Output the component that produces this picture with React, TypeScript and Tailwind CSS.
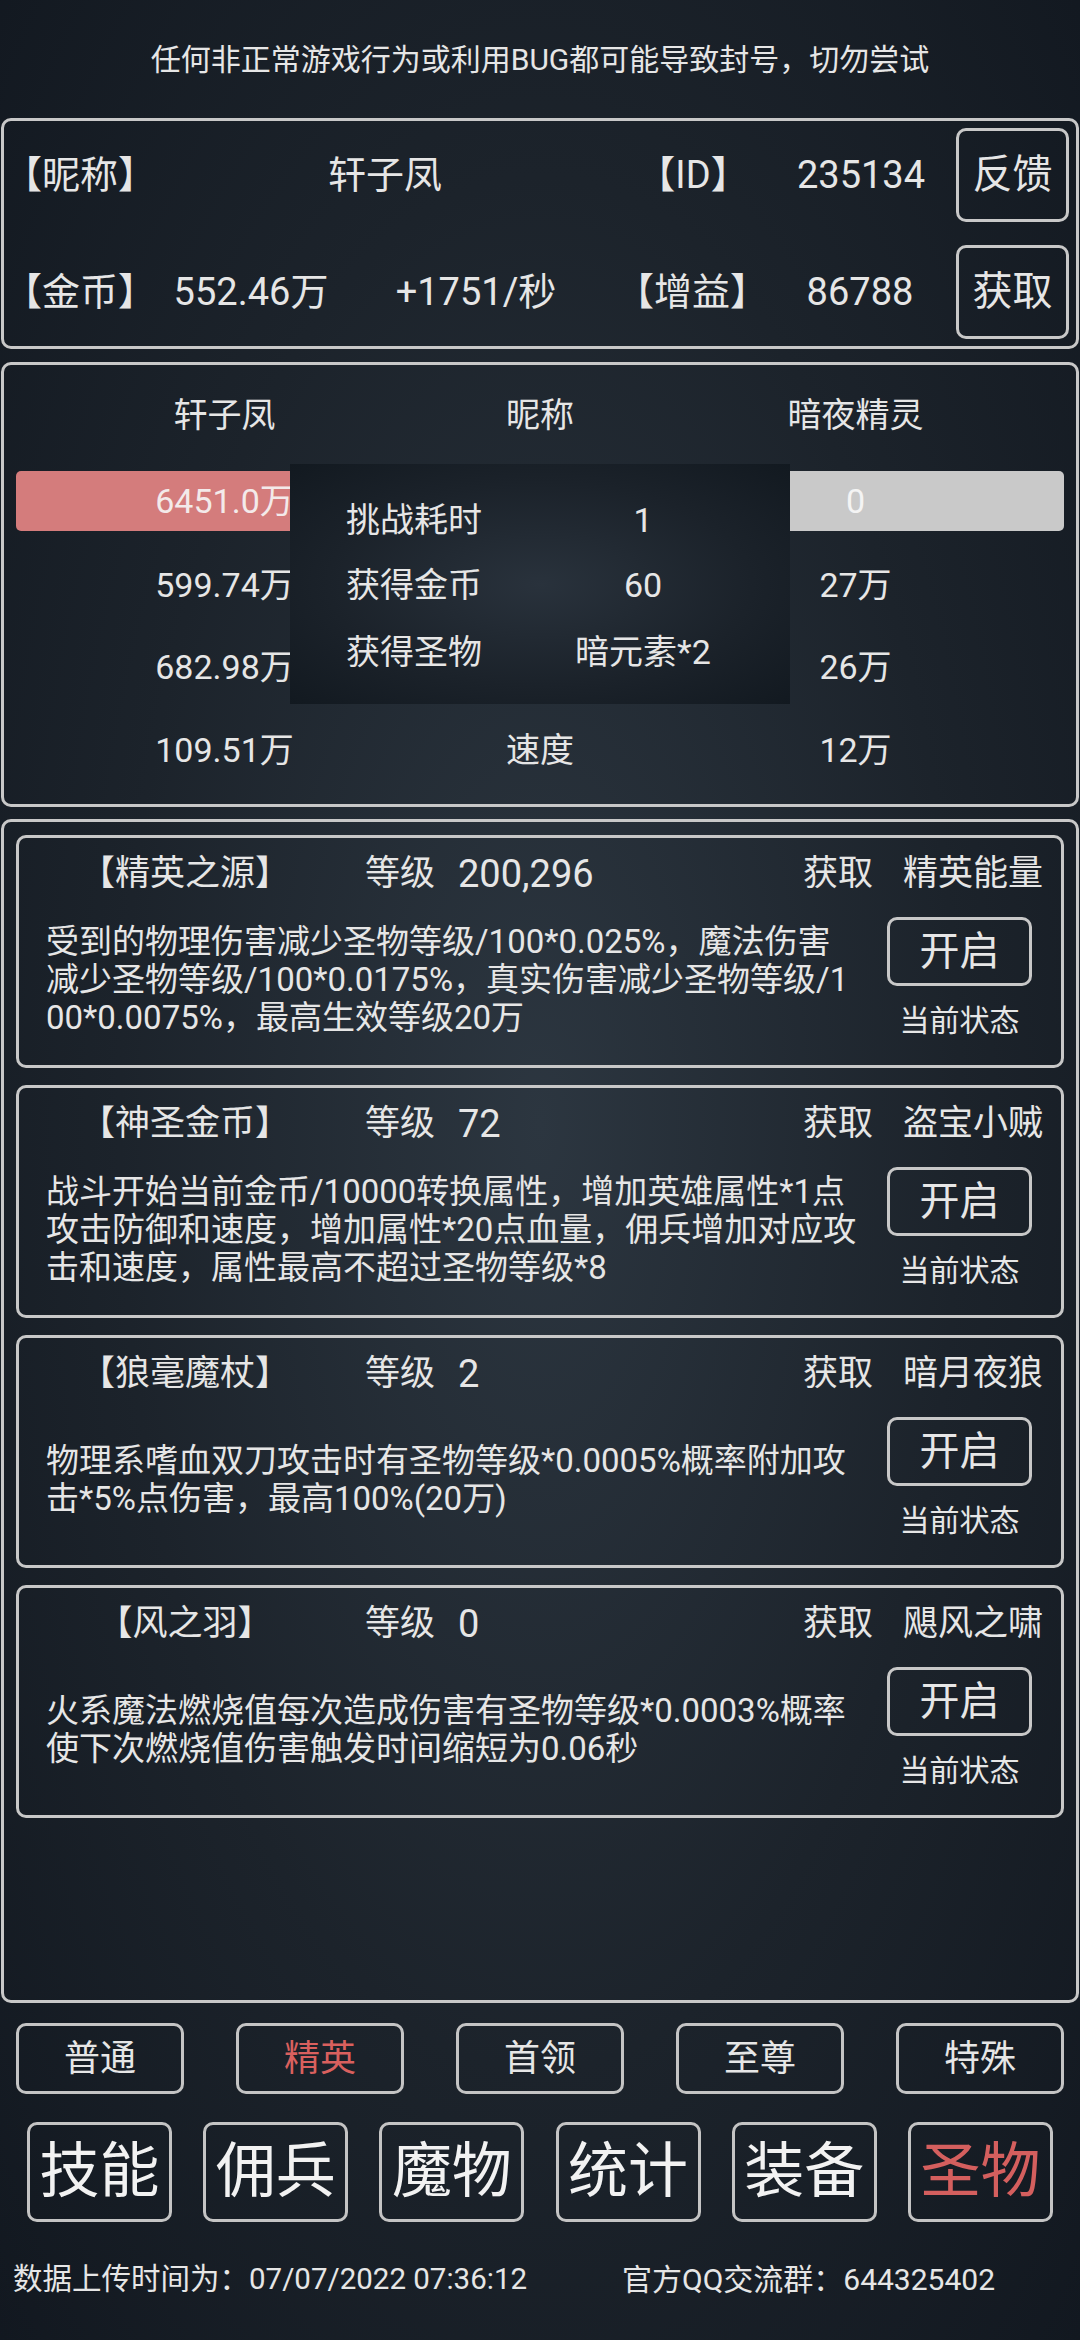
import React from "react";

const font = "font-['Roboto','Noto_Sans_CJK_SC',sans-serif]";
const line = "border-[3px] border-[#c8c8c8] rounded-[10px]";

const relics = [
  {
    name: "【精英之源】",
    level: "200,296",
    source: "精英能量",
    desc: [
      "受到的物理伤害减少圣物等级/100*0.025%，魔法伤害",
      "减少圣物等级/100*0.0175%，真实伤害减少圣物等级/1",
      "00*0.0075%，最高生效等级20万",
    ],
  },
  {
    name: "【神圣金币】",
    level: "72",
    source: "盗宝小贼",
    desc: [
      "战斗开始当前金币/10000转换属性，增加英雄属性*1点",
      "攻击防御和速度，增加属性*20点血量，佣兵增加对应攻",
      "击和速度，属性最高不超过圣物等级*8",
    ],
  },
  {
    name: "【狼毫魔杖】",
    level: "2",
    source: "暗月夜狼",
    desc: ["物理系嗜血双刀攻击时有圣物等级*0.0005%概率附加攻", "击*5%点伤害，最高100%(20万)"],
  },
  {
    name: "【风之羽】",
    level: "0",
    source: "飓风之啸",
    desc: ["火系魔法燃烧值每次造成伤害有圣物等级*0.0003%概率", "使下次燃烧值伤害触发时间缩短为0.06秒"],
  },
];

const stats = [
  { left: "599.74万", mid: "攻击", right: "27万", mt: "mt-[24px]" },
  { left: "682.98万", mid: "防御", right: "26万", mt: "mt-[22px]" },
  { left: "109.51万", mid: "速度", right: "12万", mt: "mt-[23px]" },
];

const tiers = ["普通", "精英", "首领", "至尊", "特殊"];
const tabs = ["技能", "佣兵", "魔物", "统计", "装备", "圣物"];

export default function App() {
  return (
    <div
      className={`${font} flex h-[2340px] w-[1080px] flex-col overflow-hidden bg-[radial-gradient(ellipse_at_50%_48%,#2c3640_0%,#1c232b_55%,#121820_100%)] text-[#e6e6e6]`}
    >
      {/* warning banner */}
      <div className="flex h-[118px] items-center justify-center text-[30px]">
        任何非正常游戏行为或利用BUG都可能导致封号，切勿尝试
      </div>

      {/* player info */}
      <div className={`${line} mx-[1px] flex h-[231px] flex-col gap-[23px] py-[7px] text-[38px]`}>
        <div className="flex h-[94px] items-center">
          <span className="w-[152px] text-center">【昵称】</span>
          <span className="w-[458px] text-center">轩子凤</span>
          <span className="w-[158px] text-center">【ID】</span>
          <span className="w-[178px] text-center">235134</span>
          <SideButton label="反馈" className="ml-[6px]" />
        </div>
        <div className="flex h-[94px] items-center">
          <span className="w-[152px] text-center">【金币】</span>
          <span className="w-[190px] text-center">552.46万</span>
          <span className="w-[260px] text-center">+1751/秒</span>
          <span className="w-[172px] text-center">【增益】</span>
          <span className="w-[164px] text-center">86788</span>
          <SideButton label="获取" className="ml-[14px]" />
        </div>
      </div>

      {/* battle result */}
      <div className={`${line} relative mx-[1px] mt-[13px] h-[445px] px-[12px] text-[34px]`}>
        <div className="mt-[20px] grid h-[60px] grid-cols-[417px_214px_417px] items-center text-center">
          <span>轩子凤</span>
          <span>昵称</span>
          <span>暗夜精灵</span>
        </div>
        <div className="mt-[26px] grid h-[60px] grid-cols-[417px_214px_417px] items-center text-center">
          <div className="flex h-full items-center justify-center rounded-[5px] bg-[#d47c7c] text-[#f3eaea]">
            6451.0万
          </div>
          <span>生命</span>
          <div className="flex h-full items-center justify-center rounded-[5px] bg-[#c9c9c9] text-[#f4f4f4]">
            0
          </div>
        </div>
        {stats.map((s) => (
          <div
            key={s.mid}
            className={`${s.mt} grid h-[60px] grid-cols-[417px_214px_417px] items-center text-center`}
          >
            <span>{s.left}</span>
            <span>{s.mid}</span>
            <span>{s.right}</span>
          </div>
        ))}

        {/* result popup */}
        <div className="absolute left-[286px] top-[99px] flex h-[240px] w-[500px] flex-col bg-[radial-gradient(ellipse_at_center,#29323c_0%,#1b222a_60%,#121920_100%)] pl-[56px] pt-[31px]">
          <PopupRow label="挑战耗时" value="1" />
          <PopupRow label="获得金币" value="60" className="mt-[15px]" />
          <PopupRow label="获得圣物" value="暗元素*2" className="mt-[17px]" />
        </div>
      </div>

      {/* relic list */}
      <div className={`${line} mx-[1px] mt-[12px] flex h-[1184px] flex-col gap-[17px] px-[12px] pt-[13px]`}>
        {relics.map((r) => (
          <RelicCard key={r.name} {...r} />
        ))}
      </div>

      {/* tier tabs */}
      <div className="mt-[20px] flex justify-between px-[16px]">
        {tiers.map((t) => (
          <div
            key={t}
            className={`flex h-[71px] w-[168px] items-center justify-center rounded-[10px] border-[3px] border-[#c4c4c4] text-[36px] ${
              t === "精英" ? "text-[#d9605e]" : ""
            }`}
          >
            {t}
          </div>
        ))}
      </div>

      {/* main nav */}
      <div className="mt-[28px] flex justify-between px-[27px]">
        {tabs.map((t) => (
          <div
            key={t}
            className={`flex h-[100px] w-[145px] items-center justify-center rounded-[10px] border-[3px] border-[#c4c4c4] text-[60px] ${
              t === "圣物" ? "text-[#d45f5e]" : "text-[#f2f2f2]"
            }`}
          >
            {t}
          </div>
        ))}
      </div>

      {/* footer */}
      <div className="mt-[37px] flex h-[40px] items-center pl-[13px]">
        <span className="w-[609px] text-[29.5px]">数据上传时间为：07/07/2022 07:36:12</span>
        <span className="text-[30px]">官方QQ交流群：644325402</span>
      </div>
    </div>
  );
}

function SideButton({ label, className = "" }: { label: string; className?: string }) {
  return (
    <div
      className={`${line} flex h-[94px] w-[113px] items-center justify-center text-[40px] ${className}`}
    >
      {label}
    </div>
  );
}

function PopupRow({ label, value, className = "" }: { label: string; value: string; className?: string }) {
  return (
    <div className={`flex h-[50px] items-center ${className}`}>
      <span className="w-[150px]">{label}</span>
      <span className="w-[294px] text-center">{value}</span>
    </div>
  );
}

function RelicCard({
  name,
  level,
  source,
  desc,
}: {
  name: string;
  level: string;
  source: string;
  desc: string[];
}) {
  return (
    <div className={`${line} flex h-[233px] shrink-0 flex-col`}>
      <div className="flex h-[72px] items-center text-[35px]">
        <span className="w-[332px] text-center">{name}</span>
        <span className="ml-[14px] w-[93px]">等级</span>
        <span className="flex-1 text-[38px]">{level}</span>
        <span className="w-[80px] text-center">获取</span>
        <span className="ml-[20px] mr-[13px] w-[150px] text-center">{source}</span>
      </div>
      <div className="flex flex-1 pb-[15px]">
        <div className="flex w-[868px] flex-col justify-center pl-[27px] text-[33px] leading-[38px]">
          {desc.map((d) => (
            <div key={d} className="whitespace-nowrap">
              {d}
            </div>
          ))}
        </div>
        <div className="flex flex-col items-center pt-[7px]">
          <div className="flex h-[69px] w-[145px] items-center justify-center rounded-[10px] border-[3px] border-[#c8c8c8] text-[40px]">
            开启
          </div>
          <div className="mt-[12px] text-[30px]">当前状态</div>
        </div>
      </div>
    </div>
  );
}
